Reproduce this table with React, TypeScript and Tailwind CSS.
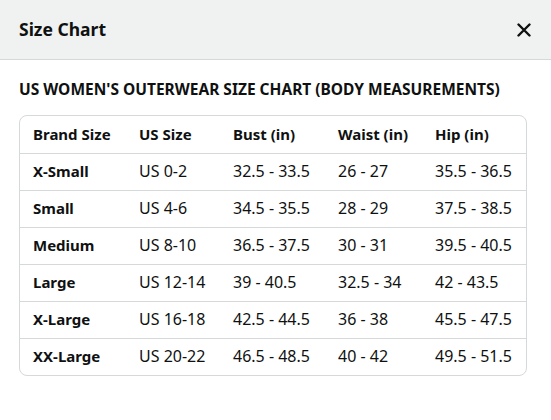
const rows = [
  ["X-Small", "US 0-2", "32.5 - 33.5", "26 - 27", "35.5 - 36.5"],
  ["Small", "US 4-6", "34.5 - 35.5", "28 - 29", "37.5 - 38.5"],
  ["Medium", "US 8-10", "36.5 - 37.5", "30 - 31", "39.5 - 40.5"],
  ["Large", "US 12-14", "39 - 40.5", "32.5 - 34", "42 - 43.5"],
  ["X-Large", "US 16-18", "42.5 - 44.5", "36 - 38", "45.5 - 47.5"],
  ["XX-Large", "US 20-22", "46.5 - 48.5", "40 - 42", "49.5 - 51.5"],
];

const headers = ["Brand Size", "US Size", "Bust (in)", "Waist (in)", "Hip (in)"];

const CloseIcon = () => (
  <svg width="14" height="14" viewBox="0 0 14 14" fill="none">
    <path d="M1.5 1.5L12.5 12.5M12.5 1.5L1.5 12.5" stroke="#0f1111" strokeWidth="2.4" strokeLinecap="round" />
  </svg>
);

const App = () => {
  return (
    <div className="w-[551px] h-[420px] bg-white text-[#0f1111] font-['Noto_Sans',sans-serif]">
      {/* Header */}
      <div className="h-[60px] bg-[#f0f2f2] border-b border-[#d5d9d9] flex items-center justify-between pl-[19px] pr-[20px]">
        <h1 className="text-[17.5px] font-bold">Size Chart</h1>
        <button className="flex items-center justify-center">
          <CloseIcon />
        </button>
      </div>
      {/* Body */}
      <div className="px-[19px] pt-[19px]">
        <h2 className="text-[15.5px] font-bold leading-5">
          US WOMEN'S OUTERWEAR SIZE CHART (BODY MEASUREMENTS)
        </h2>
        <div className="mt-[16px] w-[508px] border border-[#d5d9d9] rounded-[8px] overflow-hidden">
          <table className="w-full table-fixed border-collapse text-[16px]">
            <colgroup>
              <col className="w-[106px]" />
              <col className="w-[94px]" />
              <col className="w-[105px]" />
              <col className="w-[97px]" />
              <col />
            </colgroup>
            <thead>
              <tr className="h-[37px]">
                {headers.map((h) => (
                  <th key={h} className="pl-[13px] pb-px text-left text-[15px] font-bold whitespace-nowrap">
                    {h}
                  </th>
                ))}
              </tr>
            </thead>
            <tbody>
              {rows.map((r) => (
                <tr key={r[0]} className="h-[37px] border-t border-[#d5d9d9]">
                  {r.map((c, i) => (
                    <td
                      key={i}
                      className={`pl-[13px] pb-px whitespace-nowrap ${i === 0 ? "text-[15px] font-bold" : ""}`}
                    >
                      {c}
                    </td>
                  ))}
                </tr>
              ))}
            </tbody>
          </table>
        </div>
      </div>
    </div>
  );
};

export default App;
